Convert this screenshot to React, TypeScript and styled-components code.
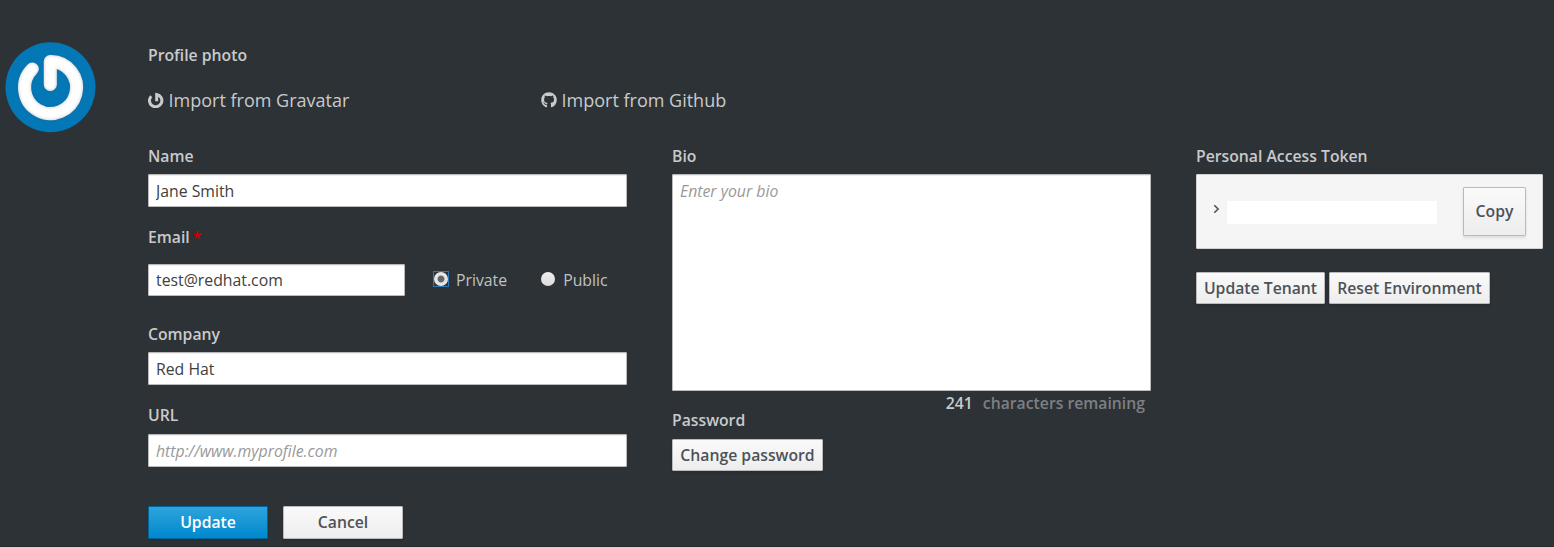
import React from "react";
import styled, { createGlobalStyle } from "styled-components";
import { FaGithub } from "react-icons/fa";

const GlobalStyle = createGlobalStyle`
  *, *::before { box-sizing: border-box; }
  body {
    margin: 0;
    background: #2d3236;
    color: #d1d1d1;
    font: 15.8px/22px "Open Sans", sans-serif;
    overflow: hidden;
  }
`;

const Page = styled.main`
  display: flex;
  height: 547px;
  padding: 42px 11px 0 5px;
  border-bottom: 1px solid #272c30;
`;

const Avatar = styled.svg`
  width: 91px;
  height: 91px;
  flex: none;
  margin-right: 52px;
`;

const Content = styled.form`
  flex: 1;
  padding-top: 2px;
`;

const Label = styled.label`
  display: block;
  height: 22px;
  font-size: 15.75px;
  font-weight: 600;
  color: #c9cacb;
  white-space: nowrap;
`;

const Required = styled.span`
  margin-left: -1px;
  color: #c00;
`;

const Imports = styled.div`
  display: flex;
  margin: 19px 0 30px;
`;

const ImportLink = styled.a`
  display: flex;
  align-items: center;
  width: 393px;
  height: 30px;
  font-size: 18px;
  color: #c9cacb;
  white-space: nowrap;
  svg { flex: none; width: 16px; height: 16px; margin-right: 4.5px; }
`;

const Columns = styled.div`
  display: grid;
  grid-template-columns: 479px 479px 347px;
  column-gap: 45px;
`;

const Column = styled.section`
  display: flex;
  flex-direction: column;
  align-items: flex-start;
`;

const Field = styled.div<{ $gap?: number; $after?: number }>`
  display: flex;
  flex-direction: column;
  width: 100%;
  gap: ${(p) => p.$gap ?? 7}px;
  margin-bottom: ${(p) => p.$after ?? 0}px;
`;

const Input = styled.input<{ $width?: number; $height?: number }>`
  width: ${(p) => (p.$width ? `${p.$width}px` : "100%")};
  height: ${(p) => p.$height ?? 33}px;
  padding: 0 7px;
  border: 1px solid #bbb;
  border-radius: 1px;
  background: #fff;
  box-shadow: inset 0 1px 1px rgba(3, 3, 3, 0.075);
  color: #404040;
  font: inherit;
  outline: 0;
  &::placeholder { color: #999; font-style: italic; opacity: 1; }
`;

const BioText = styled.textarea`
  display: block;
  width: 100%;
  height: 217px;
  padding: 5px 7px;
  border: 1px solid #bbb;
  border-radius: 1px;
  box-shadow: inset 0 1px 1px rgba(3, 3, 3, 0.075);
  font: inherit;
  resize: none;
  outline: 0;
  &::placeholder { color: #999; font-style: italic; opacity: 1; }
`;

const EmailRow = styled.div`
  display: flex;
  align-items: center;
`;

const Choice = styled.label<{ $left: number }>`
  display: flex;
  align-items: center;
  gap: 7px;
  margin-left: ${(p) => p.$left}px;
  color: #c0c1c2;
`;

const Radio = styled.span<{ $checked?: boolean }>`
  display: flex;
  flex: none;
  align-items: center;
  justify-content: center;
  width: 16px;
  height: 16px;
  margin-top: -2px;
  outline: ${(p) => (p.$checked ? "1px solid #3178b4" : "0")};
  outline-offset: -1px;
  &::before {
    content: "";
    flex: none;
    width: 14px;
    height: 14px;
    border-radius: 50%;
    background: ${(p) =>
      p.$checked
        ? "radial-gradient(circle, #666 2.8px, #e6e6e6 4px)"
        : "linear-gradient(#eee, #dcdcdc)"};
  }
`;

const Button = styled.button<{ $primary?: boolean; $width: number; $height?: number }>`
  width: ${(p) => p.$width}px;
  height: ${(p) => p.$height ?? 32}px;
  padding: 0;
  border: 1px solid ${(p) => (p.$primary ? "#00659c" : "#bbb")};
  border-radius: 1px;
  background: ${(p) =>
    p.$primary ? "linear-gradient(#2ea4dc, #0088ce)" : "linear-gradient(#fafafa, #ededed)"};
  box-shadow: 0 2px 3px rgba(3, 3, 3, 0.1);
  color: ${(p) => (p.$primary ? "#fff" : "#4d5258")};
  font: 600 15.75px/22px "Open Sans", sans-serif;
  white-space: nowrap;
`;

const Actions = styled.div<{ $gap: number; $top: number }>`
  display: flex;
  gap: ${(p) => p.$gap}px;
  margin-top: ${(p) => p.$top}px;
`;

const FormButton = styled(Button)`
  padding-bottom: 1px;
`;

const Remaining = styled.div`
  align-self: flex-end;
  height: 22px;
  margin: 1px 6px -5px 0;
  color: #7d8083;
  font-size: 15.75px;
  font-weight: 600;
  b { margin-right: 10px; color: #c9cacb; font-weight: 600; }
`;

const TokenPanel = styled.div`
  display: flex;
  align-items: center;
  width: 347px;
  height: 75px;
  padding: 0 16px 0 15px;
  border: 1px solid #d1d1d1;
  border-radius: 1px;
  background: #f5f5f5;
`;

const CopyButton = styled(Button)`
  padding-bottom: 2px;
`;

const Chevron = styled.svg`
  width: 8px;
  height: 10px;
  margin: 0 7px 5px 0;
`;

const TokenValue = styled.div`
  width: 210px;
  height: 23px;
  margin: 2px 26px 0 0;
  background: #fff;
`;

const GravatarIcon = () => (
  <svg viewBox="0 0 16 16" fill="none" stroke="currentColor" strokeWidth="3">
    <path d="M3.3 4.2A6.2 6.2 0 1 0 8.7 2.5V9.2" />
  </svg>
);

const logoPath = "M27.3 27A26 26 0 1 0 45.3 19.5V42.5";

export default function App() {
  return (
    <>
      <GlobalStyle />
      <Page>
        <Avatar viewBox="0 0 91 91">
          <defs>
            <filter id="soft" x="-20%" y="-20%" width="140%" height="140%">
              <feGaussianBlur stdDeviation="1" />
            </filter>
          </defs>
          <circle cx="45.5" cy="45.3" r="45" fill="#0478b6" />
          <g fill="none" strokeLinecap="round" strokeLinejoin="round">
            <path d={logoPath} stroke="#07578d" strokeWidth="13.5" opacity=".6" filter="url(#soft)" />
            <path d={logoPath} stroke="#e2e2e2" strokeWidth="13" />
            <path d={logoPath} stroke="#fff" strokeWidth="10.5" filter="url(#soft)" />
          </g>
        </Avatar>
        <Content onSubmit={(e) => e.preventDefault()}>
          <Label as="div">Profile photo</Label>
          <Imports>
            <ImportLink><GravatarIcon />Import from Gravatar</ImportLink>
            <ImportLink><FaGithub />Import from Github</ImportLink>
          </Imports>
          <Columns>
            <Column>
              <Field $after={19}>
                <Label>Name</Label>
                <Input defaultValue="Jane Smith" />
              </Field>
              <Field $gap={16} $after={27}>
                <Label>Email <Required>*</Required></Label>
                <EmailRow>
                  <Input $width={257} $height={32} defaultValue="test@redhat.com" />
                  <Choice $left={28}><Radio $checked />Private</Choice>
                  <Choice $left={33}><Radio />Public</Choice>
                </EmailRow>
              </Field>
              <Field $after={19}>
                <Label>Company</Label>
                <Input defaultValue="Red Hat" />
              </Field>
              <Field $gap={8}>
                <Label>URL</Label>
                <Input placeholder="http://www.myprofile.com" />
              </Field>
              <Actions $gap={15} $top={39}>
                <FormButton $primary $width={120} $height={33}>Update</FormButton>
                <FormButton $width={120} $height={33}>Cancel</FormButton>
              </Actions>
            </Column>
            <Column>
              <Field>
                <Label>Bio</Label>
                <BioText placeholder="Enter your bio" />
              </Field>
              <Remaining><b>241</b>characters remaining</Remaining>
              <Field $gap={8}>
                <Label>Password</Label>
                <Button $width={151}>Change password</Button>
              </Field>
            </Column>
            <Column>
              <Field>
                <Label as="div">Personal Access Token</Label>
                <TokenPanel>
                  <Chevron viewBox="0 0 8 10" fill="none" stroke="#4d5258" strokeWidth="1.6">
                    <path d="M2.3 1.2 6.1 5 2.3 8.8" />
                  </Chevron>
                  <TokenValue />
                  <CopyButton $height={49} $width={63}>Copy</CopyButton>
                </TokenPanel>
              </Field>
              <Actions $gap={4} $top={23}>
                <Button $width={129}>Update Tenant</Button>
                <Button $width={161}>Reset Environment</Button>
              </Actions>
            </Column>
          </Columns>
        </Content>
      </Page>
    </>
  );
}
